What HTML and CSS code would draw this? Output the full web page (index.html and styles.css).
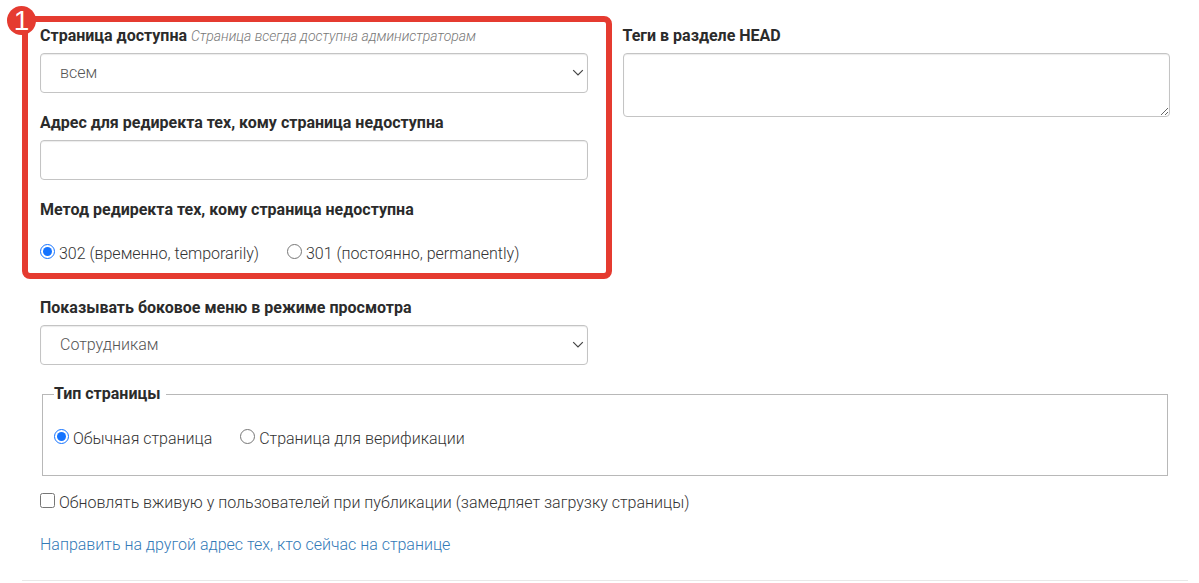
FILE: index.html
```html
<!DOCTYPE html>
<html lang="ru">
<head>
<meta charset="utf-8">
<title>Настройки страницы</title>
<link rel="stylesheet" href="styles.css">
</head>
<body>
<form class="settings">
  <div class="columns">
    <div class="column">
      <section class="access">
        <div class="field">
          <div class="caption">
            <label class="label" for="access">Страница доступна</label>
            <em class="hint">Страница всегда доступна администраторам</em>
          </div>
          <div class="select">
            <select class="control" id="access"><option>всем</option></select>
            <svg class="chevron" viewBox="0 0 12 8" aria-hidden="true"><path d="M1.2 1.2 6 6l4.8-4.8"/></svg>
          </div>
        </div>
        <div class="field">
          <label class="label" for="redirect">Адрес для редиректа тех, кому страница недоступна</label>
          <input class="control" id="redirect" type="text">
        </div>
        <div class="method" role="radiogroup" aria-labelledby="method-label">
          <div class="label" id="method-label">Метод редиректа тех, кому страница недоступна</div>
          <div class="options">
            <label class="option"><input class="mark" type="radio" name="method" checked> 302 (временно, temporarily)</label>
            <label class="option"><input class="mark" type="radio" name="method"> 301 (постоянно, permanently)</label>
          </div>
        </div>
        <div class="frame"><span class="badge">1</span></div>
      </section>
      <div class="field">
        <label class="label" for="menu">Показывать боковое меню в режиме просмотра</label>
        <div class="select">
          <select class="control" id="menu"><option>Сотрудникам</option></select>
          <svg class="chevron" viewBox="0 0 12 8" aria-hidden="true"><path d="M1.2 1.2 6 6l4.8-4.8"/></svg>
        </div>
      </div>
    </div>
    <div class="column">
      <div class="field">
        <label class="label" for="head">Теги в разделе HEAD</label>
        <textarea class="control area" id="head"></textarea>
      </div>
    </div>
  </div>
  <fieldset class="type">
    <legend class="label legend">Тип страницы</legend>
    <div class="options">
      <label class="option"><input class="mark" type="radio" name="type" checked> Обычная страница</label>
      <label class="option"><input class="mark" type="radio" name="type"> Страница для верификации</label>
    </div>
  </fieldset>
  <label class="option live"><input class="mark" type="checkbox"> Обновлять вживую у пользователей при публикации (замедляет загрузку страницы)</label>
  <a class="link" href="#">Направить на другой адрес тех, кто сейчас на странице</a>
</form>
<hr class="rule">
</body>
</html>
```
FILE: styles.css
```css
* { box-sizing: border-box; }
body {
  margin: 0;
  background: #fff;
  color: #333;
  font: 300 16px/24px Roboto, "Open Sans", sans-serif;
}
.settings {
  display: flex;
  flex-direction: column;
  align-items: flex-start;
  padding: 24px 29px 0 40px;
}
.columns {
  display: grid;
  grid-template-columns: 1fr 1fr;
  gap: 35px;
  width: 100%;
}
.column { display: flex; flex-direction: column; gap: 30px; }
.access {
  position: relative;
  display: flex;
  flex-direction: column;
  gap: 18px;
}
.field { display: flex; flex-direction: column; gap: 5px; }
.label { font-weight: 700; color: #2b2b2b; }
.hint { font-size: 14px; color: #777; }
.control {
  display: block;
  width: 100%;
  height: 40px;
  margin: 0;
  padding: 0 19px;
  border: 1px solid #c4c4c4;
  border-radius: 4px;
  background: #fff;
  box-shadow: inset 0 1px 1px rgba(0, 0, 0, .08);
  color: #555;
  font: inherit;
  appearance: none;
}
.area { height: 64px; padding: 8px 19px; resize: vertical; }
.select { position: relative; }
.chevron {
  position: absolute;
  top: 16px;
  right: 4px;
  width: 12px;
  height: 8px;
  fill: none;
  stroke: #444;
  stroke-width: 1.2;
  pointer-events: none;
}
.method { display: flex; flex-direction: column; gap: 20px; }
.options { display: flex; gap: 28px; }
.mark {
  width: 15px;
  height: 15px;
  margin: 0;
  accent-color: #1473ff;
}
.frame {
  position: absolute;
  inset: -8px -24px -13px -18px;
  border: 6px solid #e53b30;
  border-radius: 8px;
  pointer-events: none;
}
.badge {
  position: absolute;
  top: -16px;
  left: -21px;
  width: 29px;
  height: 29px;
  border-radius: 50%;
  background: #e53b30;
  color: #fff;
  font: 400 28px/29px "Liberation Sans", sans-serif;
  text-align: center;
}
.type {
  align-self: stretch;
  margin: 17px 2px 0;
  padding: 21px 11px 24px;
  border: 1px solid #b8b8b8;
}
.legend { padding: 0 6px 0 0; }
.live { margin-top: 15px; }
.link { margin-top: 18px; color: #337ab7; text-decoration: none; }
.rule { margin: 23px 11px 0 22px; border: 0; border-top: 1px solid #e8e8e8; }
```
